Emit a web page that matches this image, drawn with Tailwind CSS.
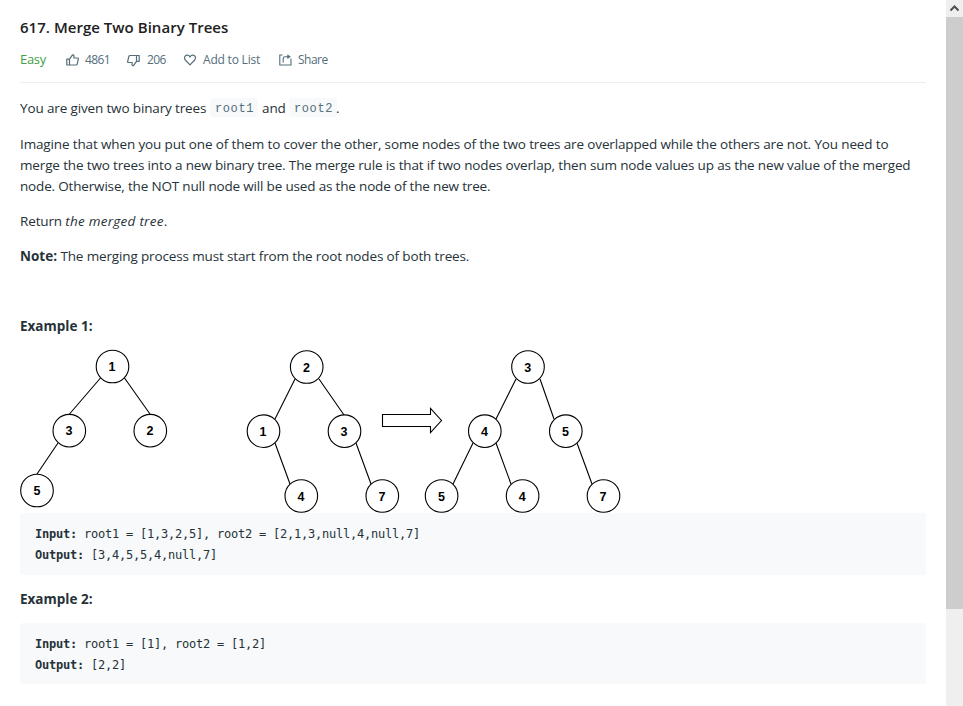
<!DOCTYPE html>
<html lang="en">
<head>
<meta charset="utf-8">
<title>617. Merge Two Binary Trees</title>
<script src="https://cdn.jsdelivr.net/npm/@tailwindcss/browser@4"></script>
</head>
<body class="bg-white font-['Open_Sans','Noto_Sans',sans-serif] text-[#263238]">
<div class="flex h-[706px] w-[963px] overflow-hidden">
  <main class="w-[946px] pl-5 pr-5 pt-[15px]">
    <h1 class="h-6 text-[15px] leading-6 font-semibold tracking-[0.03px] text-[#212121] whitespace-nowrap"><span>617. Merge Two Binary Trees</span></h1>
    <div class="mt-[9px] flex h-[35px] items-start border-b border-[#eeeeee] text-[12px] leading-6 text-[#546e7a] whitespace-nowrap">
      <span class="w-[46px] text-[13px] leading-[23px] tracking-[-0.3px] text-[#43a047]"><span>Easy</span></span>
      <span class="flex w-[61px] items-center gap-[6px]">
        <svg class="size-[13px]" viewBox="0 0 13 13" fill="none" stroke="#546e7a" stroke-width="1.2" stroke-linejoin="round"><path d="M.8 5.200H3.500V11H.8ZM3.500 5.200 6.500 .8C8 .6 8.200 1.800 7.800 4H11.500C12.300 4 12.500 4.500 12.300 5.200L11.200 10C11 10.700 10.600 11 10 11H3.500"/></svg><span class="tracking-[-0.65px]">4861</span></span>
      <span class="flex w-[57px] items-center gap-[6px]">
        <svg class="size-[13px]" viewBox="0 0 13 13" fill="none" stroke="#546e7a" stroke-width="1.2" stroke-linejoin="round"><path d="M12.200 7.300H9.500V1.500H12.200ZM9.500 7.300 6.500 11.700C5 11.900 4.800 10.700 5.200 8.500H1.500C.7 8.500.5 8 .7 7.300L1.800 2.500C2 1.800 2.400 1.500 3 1.500H9.500"/></svg><span class="pl-px tracking-[-0.6px]">206</span></span>
      <span class="flex w-[95px] items-center gap-[6px]">
        <svg class="size-[13px]" viewBox="0 0 13 13" fill="none" stroke="#546e7a" stroke-width="1.2" stroke-linejoin="round"><path d="M6 10.800 1.300 6C-.3 3.700 .8 1.200 3.200 1.200 4.500 1.200 5.500 2 6 3 6.500 2 7.500 1.200 8.800 1.200 11.200 1.200 12.300 3.700 10.700 6Z"/></svg><span class="tracking-[-0.2px]">Add to List</span></span>
      <span class="flex items-center gap-[6px]">
        <svg class="size-[13px]" viewBox="0 0 13 13" fill="none" stroke="#546e7a" stroke-width="1.1"><path d="M3.500 1H.8V11H12V4.500M4.200 8.500V4.500Q4.200 2.700 6 2.700H9"/><path d="M8.300 .3 11.800 2.700 8.300 5.100Z" fill="#546e7a" stroke="none"/></svg><span class="tracking-[-0.5px]">Share</span></span>
    </div>
    <div class="text-[13.5px] leading-[21px] whitespace-nowrap">
      <p class="mt-[15px] flex"><span class="w-[186px] tracking-[-0.14px]">You are given two binary trees</span><code class="ml-1 h-[19px] rounded-[3px] bg-[#f7f9fa] pl-[5px] pr-1 font-['Liberation_Mono',monospace] text-[12px] leading-[22px] tracking-[0.6px] text-[#546e7a]">root1</code><span class="ml-[4px] w-[23px] tracking-[-0.14px]">and</span><code class="ml-[4px] h-[19px] rounded-[3px] bg-[#f7f9fa] pl-[5px] pr-1 font-['Liberation_Mono',monospace] text-[12px] leading-[22px] tracking-[0.6px] text-[#546e7a]">root2</code><span class="-ml-px">.</span></p>
      <p class="mt-[15px]"><span class="tracking-[-0.138px]">Imagine that when you put one of them to cover the other, some nodes of the two trees are overlapped while the others are not. You need to</span><br><span class="tracking-[-0.146px]">merge the two trees into a new binary tree. The merge rule is that if two nodes overlap, then sum node values up as the new value of the merged</span><br><span class="tracking-[-0.172px]">node. Otherwise, the NOT null node will be used as the node of the new tree.</span></p>
      <p class="mt-[14px]"><span class="tracking-[-0.14px]">Return <em class="tracking-[0.25px]">the merged tree</em>.</span></p>
      <p class="mt-[14px]"><span class="tracking-[-0.14px]"><b class="tracking-normal">Note:</b> The merging process must start from the root nodes of both trees.</span></p>
      <p class="mt-[49px] font-bold"><span>Example 1:</span></p>
    </div>
    <svg class="mt-[12px] block h-[164px] w-[602px]" viewBox="20 349 602 164" fill="white" stroke="black" stroke-width="1.1">
      <path fill="none" d="M100.500 378 69.500 414M124.500 378 150 414M58 443 37 474M295 379 275 419M319 379 344 415M275 443 290 484M356 443 371 484M516 379 496 419M540 379 554 419M473 443 453 484M496 443 511 484M577 443 592 484"/>
      <path d="M382.500 414.500H430.500V408.500L441.500 420.500 430.500 432.500V426.500H382.500Z"/>
      <g><circle cx="112.500" cy="366.500" r="16.300"/><circle cx="69.300" cy="430.700" r="16.300"/><circle cx="150.300" cy="430.700" r="16.300"/><circle cx="37" cy="490.500" r="16.300"/><circle cx="306.700" cy="367" r="16.300"/><circle cx="263.500" cy="431.200" r="16.300"/><circle cx="344.500" cy="431.200" r="16.300"/><circle cx="301.300" cy="496" r="16.300"/><circle cx="382.300" cy="496" r="16.300"/><circle cx="528" cy="367" r="16.300"/><circle cx="484.800" cy="431.200" r="16.300"/><circle cx="565.800" cy="431.200" r="16.300"/><circle cx="441.600" cy="496" r="16.300"/><circle cx="522.600" cy="496" r="16.300"/><circle cx="603.500" cy="496" r="16.300"/></g>
      <g class="font-['Liberation_Sans',Arial,sans-serif] text-[12.5px] font-bold" fill="black" stroke="none" text-anchor="middle"><text x="112" y="371">1</text><text x="69" y="435">3</text><text x="150" y="435">2</text><text x="37" y="495">5</text><text x="306.500" y="371.500">2</text><text x="263" y="436">1</text><text x="344" y="436">3</text><text x="301" y="500.500">4</text><text x="382" y="500.500">7</text><text x="527.700" y="371.500">3</text><text x="484.500" y="436">4</text><text x="565.500" y="436">5</text><text x="441.500" y="500.500">5</text><text x="522.300" y="500.500">4</text><text x="603" y="500.500">7</text></g>
    </svg>
    <pre class="h-[62px] rounded-[3px] bg-[#f7f9fa] px-[15px] pt-[11px] font-['DejaVu_Sans_Mono',monospace] text-[12px] leading-[21px] tracking-[-0.224px]"><b>Input:</b> root1 = [1,3,2,5], root2 = [2,1,3,null,4,null,7]
<b>Output:</b> [3,4,5,5,4,null,7]</pre>
    <p class="mt-[14px] text-[13.5px] leading-[21px] font-bold"><span>Example 2:</span></p>
    <pre class="mt-[13px] h-[61px] rounded-[3px] bg-[#f7f9fa] px-[15px] pt-[11px] font-['DejaVu_Sans_Mono',monospace] text-[12px] leading-[21px] tracking-[-0.224px]"><b>Input:</b> root1 = [1], root2 = [1,2]
<b>Output:</b> [2,2]</pre>
  </main>
  <aside class="flex w-[17px] flex-col bg-[#efefef]">
    <div class="flex h-[17px] items-center justify-center"><svg class="h-[7px] w-[9px]" viewBox="0 0 9 7" fill="none" stroke="#505050" stroke-width="2"><path d="M.5 5.500 4.500 1.500 8.500 5.500"/></svg></div>
    <div class="h-[592px] bg-[#cdcdcd]"></div>
  </aside>
</div>
</body>
</html>
